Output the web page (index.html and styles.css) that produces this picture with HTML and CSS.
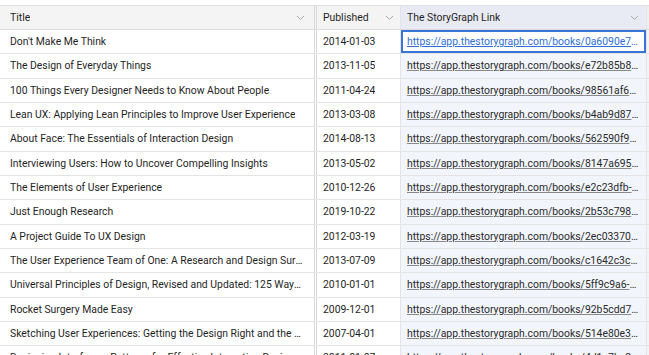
FILE: index.html
```html
<!DOCTYPE html>
<html lang="en">
<head>
    <meta charset="UTF-8">
    <meta name="viewport" content="width=device-width, initial-scale=1.0">
    <title>Books - Grid</title>
    <link rel="stylesheet" href="styles.css">
</head>
<body>
    <div class="grid-wrapper">
        <div class="grid-row grid-header">
            <div class="cell cell-title">
                <span class="cell-text">Title</span>
                <svg class="chevron" width="9" height="6" viewBox="0 0 9 6"><path d="M1 1l3.5 3.5L8 1" fill="none" stroke="#a8a8a8" stroke-width="1"/></svg>
            </div>
            <div class="cell cell-date">
                <span class="cell-text">Published</span>
                <svg class="chevron" width="9" height="6" viewBox="0 0 9 6"><path d="M1 1l3.5 3.5L8 1" fill="none" stroke="#a8a8a8" stroke-width="1"/></svg>
            </div>
            <div class="cell cell-link">
                <span class="cell-text">The StoryGraph Link</span>
                <svg class="chevron" width="9" height="6" viewBox="0 0 9 6"><path d="M1 1l3.5 3.5L8 1" fill="none" stroke="#a8a8a8" stroke-width="1"/></svg>
            </div>
            <div class="cell cell-edge"></div>
        </div>

        <div class="grid-row">
            <div class="cell cell-title"><span class="cell-text">Don't Make Me Think</span></div>
            <div class="cell cell-date"><span class="cell-text">2014-01-03</span></div>
            <div class="cell cell-link cell-active"><a class="cell-text link" href="#">https://app.thestorygraph.com/books/0a6090e7-4c1d-4e2b-9a1f</a></div>
            <div class="cell cell-edge"></div>
        </div>
        <div class="grid-row">
            <div class="cell cell-title"><span class="cell-text">The Design of Everyday Things</span></div>
            <div class="cell cell-date"><span class="cell-text">2013-11-05</span></div>
            <div class="cell cell-link"><a class="cell-text link" href="#">https://app.thestorygraph.com/books/e72b85b8-2d4c-4f7a-8e1b</a></div>
            <div class="cell cell-edge"></div>
        </div>
        <div class="grid-row">
            <div class="cell cell-title"><span class="cell-text">100 Things Every Designer Needs to Know About People</span></div>
            <div class="cell cell-date"><span class="cell-text">2011-04-24</span></div>
            <div class="cell cell-link"><a class="cell-text link" href="#">https://app.thestorygraph.com/books/98561af6-7b3e-4d1c-a2f9</a></div>
            <div class="cell cell-edge"></div>
        </div>
        <div class="grid-row">
            <div class="cell cell-title"><span class="cell-text">Lean UX: Applying Lean Principles to Improve User Experience</span></div>
            <div class="cell cell-date"><span class="cell-text">2013-03-08</span></div>
            <div class="cell cell-link"><a class="cell-text link" href="#">https://app.thestorygraph.com/books/b4ab9d87-1e2f-4a3b-b6c8</a></div>
            <div class="cell cell-edge"></div>
        </div>
        <div class="grid-row">
            <div class="cell cell-title"><span class="cell-text">About Face: The Essentials of Interaction Design</span></div>
            <div class="cell cell-date"><span class="cell-text">2014-08-13</span></div>
            <div class="cell cell-link"><a class="cell-text link" href="#">https://app.thestorygraph.com/books/562590f9-3c4d-4b5e-9f7a</a></div>
            <div class="cell cell-edge"></div>
        </div>
        <div class="grid-row">
            <div class="cell cell-title"><span class="cell-text">Interviewing Users: How to Uncover Compelling Insights</span></div>
            <div class="cell cell-date"><span class="cell-text">2013-05-02</span></div>
            <div class="cell cell-link"><a class="cell-text link" href="#">https://app.thestorygraph.com/books/8147a695-5d6e-4c7f-8a9b</a></div>
            <div class="cell cell-edge"></div>
        </div>
        <div class="grid-row">
            <div class="cell cell-title"><span class="cell-text">The Elements of User Experience</span></div>
            <div class="cell cell-date"><span class="cell-text">2010-12-26</span></div>
            <div class="cell cell-link"><a class="cell-text link" href="#">https://app.thestorygraph.com/books/e2c23dfb-6e7f-4d8a-9b0c</a></div>
            <div class="cell cell-edge"></div>
        </div>
        <div class="grid-row">
            <div class="cell cell-title"><span class="cell-text">Just Enough Research</span></div>
            <div class="cell cell-date"><span class="cell-text">2019-10-22</span></div>
            <div class="cell cell-link"><a class="cell-text link" href="#">https://app.thestorygraph.com/books/2b53c798-7f8a-4e9b-a0c1</a></div>
            <div class="cell cell-edge"></div>
        </div>
        <div class="grid-row">
            <div class="cell cell-title"><span class="cell-text">A Project Guide To UX Design</span></div>
            <div class="cell cell-date"><span class="cell-text">2012-03-19</span></div>
            <div class="cell cell-link"><a class="cell-text link" href="#">https://app.thestorygraph.com/books/2ec03370-8a9b-4f0c-b1d2</a></div>
            <div class="cell cell-edge"></div>
        </div>
        <div class="grid-row">
            <div class="cell cell-title"><span class="cell-text">The User Experience Team of One: A Research and Design Survival Guide</span></div>
            <div class="cell cell-date"><span class="cell-text">2013-07-09</span></div>
            <div class="cell cell-link"><a class="cell-text link" href="#">https://app.thestorygraph.com/books/c1642c3c-9b0c-4a1d-c2e3</a></div>
            <div class="cell cell-edge"></div>
        </div>
        <div class="grid-row">
            <div class="cell cell-title"><span class="cell-text">Universal Principles of Design, Revised and Updated: 125 Ways to Enhance Usability</span></div>
            <div class="cell cell-date"><span class="cell-text">2010-01-01</span></div>
            <div class="cell cell-link"><a class="cell-text link" href="#">https://app.thestorygraph.com/books/5ff9c9a6-0c1d-4b2e-d3f4</a></div>
            <div class="cell cell-edge"></div>
        </div>
        <div class="grid-row">
            <div class="cell cell-title"><span class="cell-text">Rocket Surgery Made Easy</span></div>
            <div class="cell cell-date"><span class="cell-text">2009-12-01</span></div>
            <div class="cell cell-link"><a class="cell-text link" href="#">https://app.thestorygraph.com/books/92b5cdd7-1d2e-4c3f-e4a5</a></div>
            <div class="cell cell-edge"></div>
        </div>
        <div class="grid-row">
            <div class="cell cell-title"><span class="cell-text">Sketching User Experiences: Getting the Design Right and the Right Design</span></div>
            <div class="cell cell-date"><span class="cell-text">2007-04-01</span></div>
            <div class="cell cell-link"><a class="cell-text link" href="#">https://app.thestorygraph.com/books/514e80e3-2e3f-4d4a-f5b6</a></div>
            <div class="cell cell-edge"></div>
        </div>
        <div class="grid-row">
            <div class="cell cell-title"><span class="cell-text">Designing Interfaces: Patterns for Effective Interaction Design</span></div>
            <div class="cell cell-date"><span class="cell-text">2011-01-07</span></div>
            <div class="cell cell-link"><a class="cell-text link" href="#">https://app.thestorygraph.com/books/4d1a7bc2-3f4a-4e5b-a6c7</a></div>
            <div class="cell cell-edge"></div>
        </div>
    </div>
</body>
</html>
```

FILE: styles.css
```css
body {
    margin: 0;
    padding: 0;
    background-color: white;
    font-family: "Roboto", "Liberation Sans", sans-serif;
    font-size: 10.4px;
    color: #1f1f1f;
    overflow: hidden;
}

.grid-wrapper {
    display: flex;
    flex-direction: column;
    padding-top: 5px;
}

.grid-row {
    display: grid;
    grid-template-columns: 317px 84px 245px 3px;
    height: 24.33px;
    box-sizing: border-box;
    border-bottom: 1px solid #e4e4e4;
}

.grid-header {
    height: 25px;
    background-color: #f4f4f4;
    border-top: 1px solid #e0e0e0;
    border-bottom: 1px solid #dcdcdc;
}

.cell {
    display: flex;
    align-items: center;
    justify-content: space-between;
    padding: 1px 6px 0;
    min-width: 0;
    box-sizing: border-box;
}

.grid-header .cell {
    padding-top: 0;
}

.cell-title {
    padding-left: 10px;
    padding-right: 9px;
    border-right: 3px double #dadada;
}

.cell-date {
    border-right: 1px solid #e4e4e4;
}

.cell-link {
    background-color: #f2f5fc;
    padding-right: 7px;
}

.grid-header .cell-link {
    background-color: #e8ebf3;
}

.cell-edge {
    padding: 0;
    background-color: #f4f4f4;
    border-left: 1px solid #e4e4e4;
}

.grid-header .cell-edge {
    background-color: #f0f0f0;
}

.cell-text {
    white-space: nowrap;
    overflow: hidden;
    text-overflow: ellipsis;
    min-width: 0;
    line-height: 14px;
}

.chevron {
    flex-shrink: 0;
    margin-left: 4px;
}

.link {
    color: #2a2a2a;
    text-decoration: underline;
    text-decoration-color: #8a8a8a;
}

.cell-active {
    outline: 2px solid #3a74d8;
    outline-offset: -2px;
    background-color: white;
}

.cell-active .link {
    color: #2f6fd6;
    text-decoration-color: #2f6fd6;
}
```
